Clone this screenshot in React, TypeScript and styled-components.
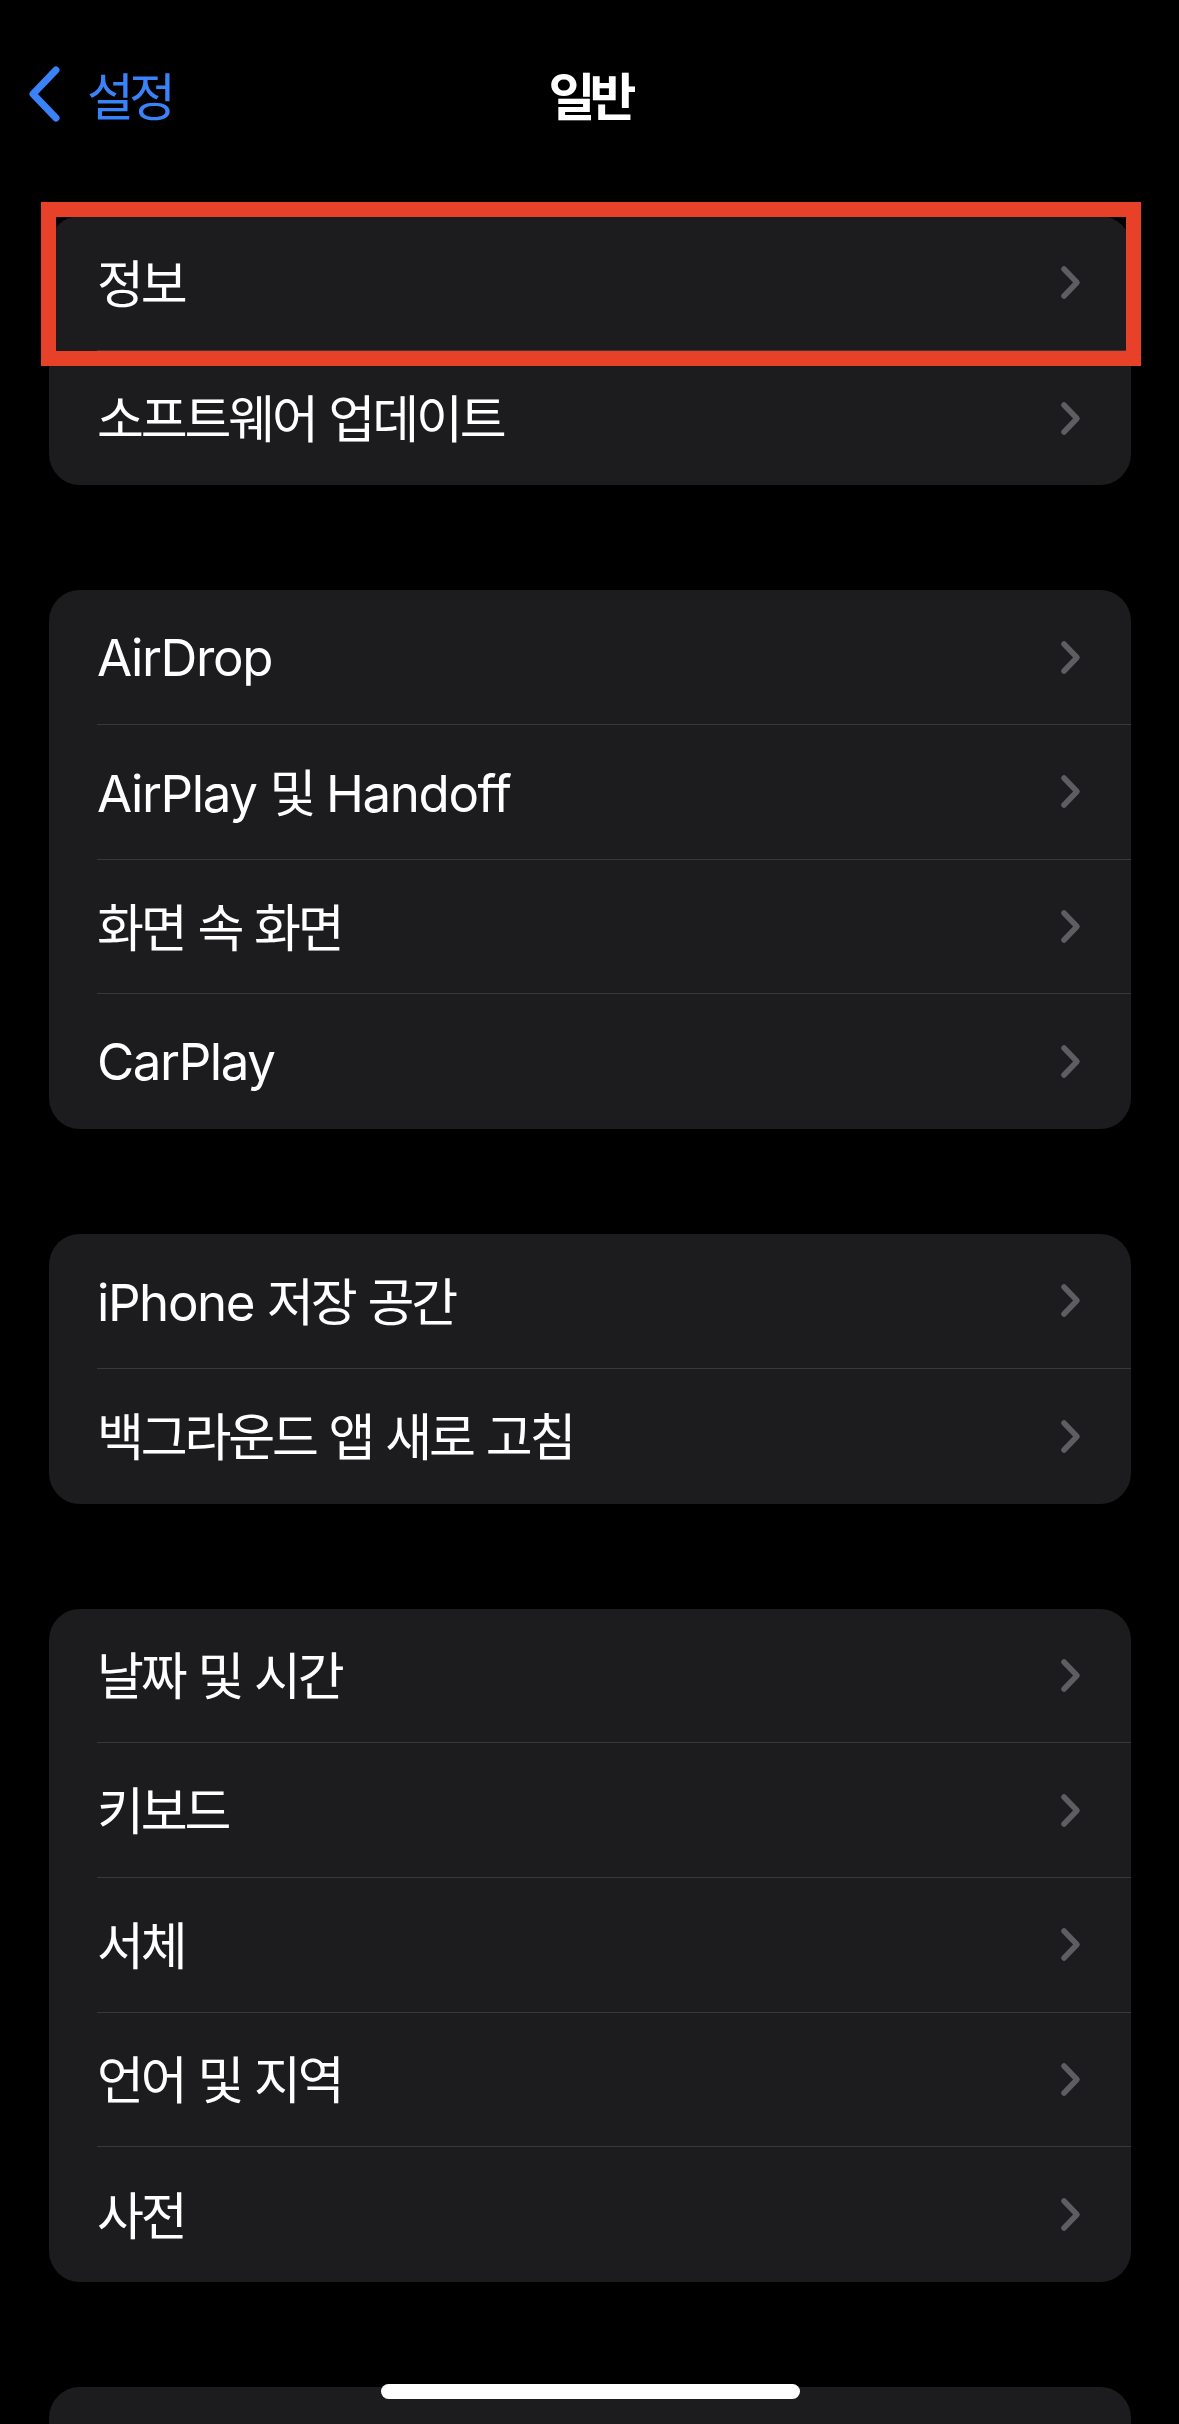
import React from "react";
import styled, { createGlobalStyle } from "styled-components";

const GlobalStyle = createGlobalStyle`
  html, body {
    margin: 0;
    padding: 0;
    background: #000000;
  }
  body {
    font-family: Inter, "Noto Sans CJK KR", sans-serif;
    color: #ffffff;
    -webkit-font-smoothing: antialiased;
  }
`;

const Screen = styled.div`
  width: 1179px;
  min-height: 2424px;
  background: #000000;
  display: flex;
  flex-direction: column;
`;

const NavBar = styled.header`
  margin-top: 60px;
  height: 68px;
  display: grid;
  grid-template-columns: 1fr auto 1fr;
  align-items: center;
`;

const BackButton = styled.div`
  display: flex;
  align-items: center;
  gap: 27px;
  padding-left: 28px;
  color: #3a82f7;
`;

const BackLabel = styled.span`
  font-family: "Noto Sans CJK KR", sans-serif;
  font-size: 51px;
  letter-spacing: -5px;
  line-height: 1;
`;

const Title = styled.h1`
  margin: 0;
  font-family: "Noto Sans CJK KR", sans-serif;
  font-size: 51px;
  font-weight: 700;
  letter-spacing: -6px;
  line-height: 1;
  color: #ffffff;
`;

const Groups = styled.main`
  margin-top: 88px;
  padding: 0 48px 0 49px;
  display: flex;
  flex-direction: column;
  gap: 105px;
`;

const CardWrap = styled.div`
  position: relative;
`;

const Card = styled.section`
  background: #1c1c1e;
  border-radius: 31px;
  overflow: hidden;
`;

const Row = styled.div`
  padding-left: 48px;
  height: 134.7px;
  &:last-child > div {
    border-bottom: none;
  }
`;

const RowInner = styled.div`
  height: 100%;
  box-sizing: border-box;
  display: flex;
  align-items: center;
  justify-content: space-between;
  padding-right: 50px;
  border-bottom: 1.5px solid #38383b;
`;

const RowLabel = styled.span`
  font-size: 51px;
  line-height: 1;
  letter-spacing: -1.4px;
  color: #ffffff;
  white-space: nowrap;
`;

const Hangul = styled.span`
  font-family: "Noto Sans CJK KR", sans-serif;
  letter-spacing: -3.2px;
`;

const Highlight = styled.div`
  position: absolute;
  top: -14px;
  left: -8px;
  right: -10px;
  height: 164px;
  box-sizing: border-box;
  border: 15px solid #e8412a;
  pointer-events: none;
`;

const HomeIndicator = styled.div`
  position: fixed;
  left: 50%;
  bottom: 25px;
  width: 419px;
  height: 15px;
  margin-left: -209px;
  border-radius: 8px;
  background: #ffffff;
`;

const HANGUL_RUN = /([\uAC00-\uD7A3\u3131-\u318E]+)/;

function Label({ text }: { text: string }) {
  const parts = text.split(HANGUL_RUN).filter((p) => p.length > 0);
  return (
    <RowLabel>
      {parts.map((p, i) =>
        HANGUL_RUN.test(p) ? <Hangul key={i}>{p}</Hangul> : <span key={i}>{p}</span>
      )}
    </RowLabel>
  );
}

function Chevron() {
  return (
    <svg width="21" height="35" viewBox="0 0 21 35" fill="none">
      <path
        d="M4 4 L17 17.5 L4 31"
        stroke="#5e5e62"
        strokeWidth="5.5"
        strokeLinecap="round"
        strokeLinejoin="round"
      />
    </svg>
  );
}

function BackChevron() {
  return (
    <svg width="32" height="56" viewBox="0 0 32 56" fill="none">
      <path
        d="M28 4 L5 28 L28 52"
        stroke="#3a82f7"
        strokeWidth="7"
        strokeLinecap="round"
        strokeLinejoin="round"
      />
    </svg>
  );
}

function Group({ items, highlightFirst }: { items: string[]; highlightFirst?: boolean }) {
  return (
    <CardWrap>
      <Card>
        {items.map((t, i) => (
          <Row key={i}>
            <RowInner>
              {t ? <Label text={t} /> : <span />}
              <Chevron />
            </RowInner>
          </Row>
        ))}
      </Card>
      {highlightFirst && <Highlight />}
    </CardWrap>
  );
}

const groups: string[][] = [
  ["정보", "소프트웨어 업데이트"],
  ["AirDrop", "AirPlay 및 Handoff", "화면 속 화면", "CarPlay"],
  ["iPhone 저장 공간", "백그라운드 앱 새로 고침"],
  ["날짜 및 시간", "키보드", "서체", "언어 및 지역", "사전"],
  [""],
];

export default function App() {
  return (
    <>
      <GlobalStyle />
      <Screen>
        <NavBar>
          <BackButton>
            <BackChevron />
            <BackLabel>설정</BackLabel>
          </BackButton>
          <Title>일반</Title>
          <div />
        </NavBar>
        <Groups>
          {groups.map((g, i) => (
            <Group key={i} items={g} highlightFirst={i === 0} />
          ))}
        </Groups>
      </Screen>
      <HomeIndicator />
    </>
  );
}
